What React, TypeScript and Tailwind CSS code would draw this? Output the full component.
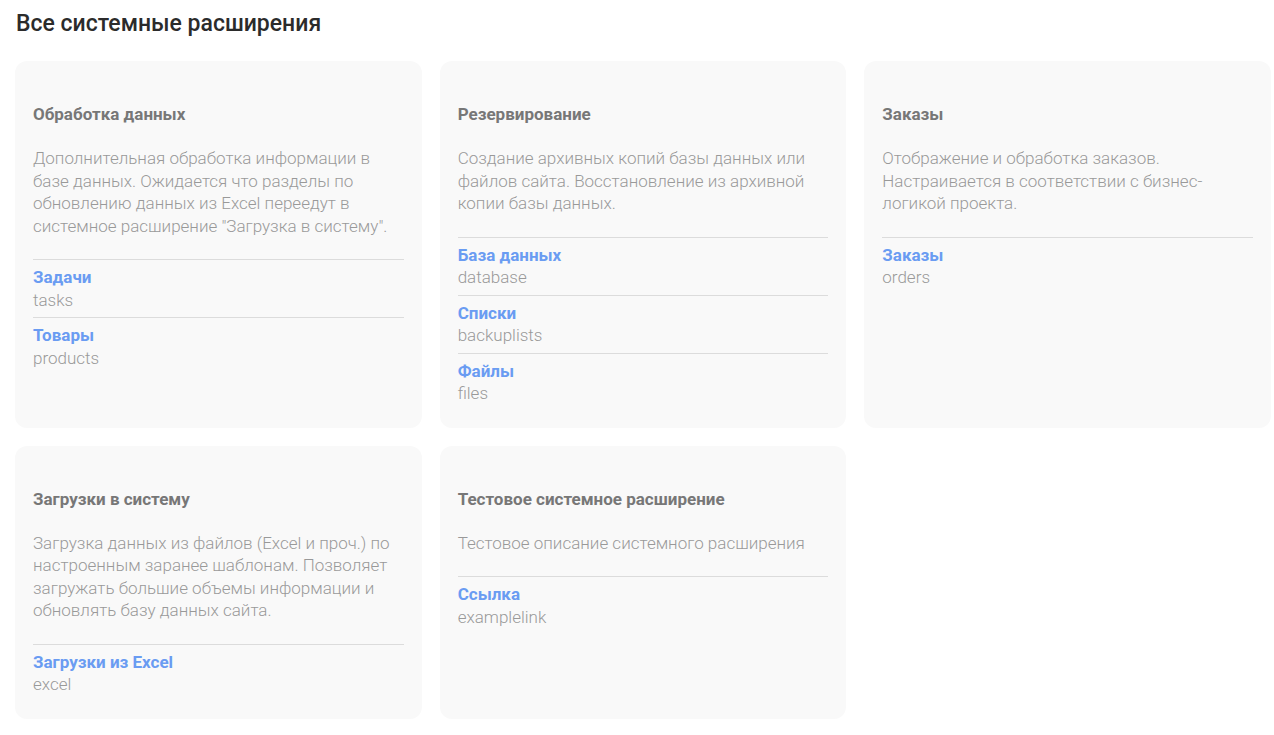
import React from 'react';

interface ExtLink {
  title: string;
  slug: string;
}

interface Extension {
  id: string;
  title: string;
  description: string;
  links: ExtLink[];
}

const extensions: Extension[] = [
  {
    id: 'data',
    title: 'Обработка данных',
    description:
      'Дополнительная обработка информации в базе данных. Ожидается что разделы по обновлению данных из Excel переедут в системное расширение "Загрузка в систему".',
    links: [
      { title: 'Задачи', slug: 'tasks' },
      { title: 'Товары', slug: 'products' },
    ],
  },
  {
    id: 'backup',
    title: 'Резервирование',
    description:
      'Создание архивных копий базы данных или файлов сайта. Восстановление из архивной копии базы данных.',
    links: [
      { title: 'База данных', slug: 'database' },
      { title: 'Списки', slug: 'backuplists' },
      { title: 'Файлы', slug: 'files' },
    ],
  },
  {
    id: 'orders',
    title: 'Заказы',
    description:
      'Отображение и обработка заказов. Настраивается в соответствии с бизнес-логикой проекта.',
    links: [{ title: 'Заказы', slug: 'orders' }],
  },
  {
    id: 'import',
    title: 'Загрузки в систему',
    description:
      'Загрузка данных из файлов (Excel и проч.) по настроенным заранее шаблонам. Позволяет загружать большие объемы информации и обновлять базу данных сайта.',
    links: [{ title: 'Загрузки из Excel', slug: 'excel' }],
  },
  {
    id: 'test',
    title: 'Тестовое системное расширение',
    description: 'Тестовое описание системного расширения',
    links: [{ title: 'Ссылка', slug: 'examplelink' }],
  },
];

function ExtensionCard({ ext }: { ext: Extension }) {
  return (
    <div className="rounded-[12px] bg-[#f9f9f9] px-[18px] pt-[42px] pb-[17px]">
      <h3 className="text-[17px] leading-[22px] font-bold text-[#777]">{ext.title}</h3>
      <p className="mt-[22px] pb-[22px] text-[17px] leading-[22.5px] font-light text-[#999]">
        {ext.description}
      </p>
      <ul>
        {ext.links.map((link) => (
          <li key={link.slug} className="border-t border-[#dcdcdc] py-[6px]">
            <a href="#" className="block text-[17px] leading-[22.5px] font-bold text-[#6a9cf2]">
              {link.title}
            </a>
            <div className="text-[17px] leading-[22.5px] font-light text-[#999]">{link.slug}</div>
          </li>
        ))}
      </ul>
    </div>
  );
}

export default function App() {
  return (
    <div className="min-h-screen bg-white pl-[15px] pr-[3px] pt-[10px] font-['Roboto',sans-serif]">
      <h1 className="pl-px text-[23px] leading-[28px] font-medium text-[#2b2b2b]">
        Все системные расширения
      </h1>
      <div className="mt-[23px] grid grid-cols-3 gap-x-[18px] gap-y-[18px]">
        {extensions.map((ext) => (
          <ExtensionCard key={ext.id} ext={ext} />
        ))}
      </div>
    </div>
  );
}
